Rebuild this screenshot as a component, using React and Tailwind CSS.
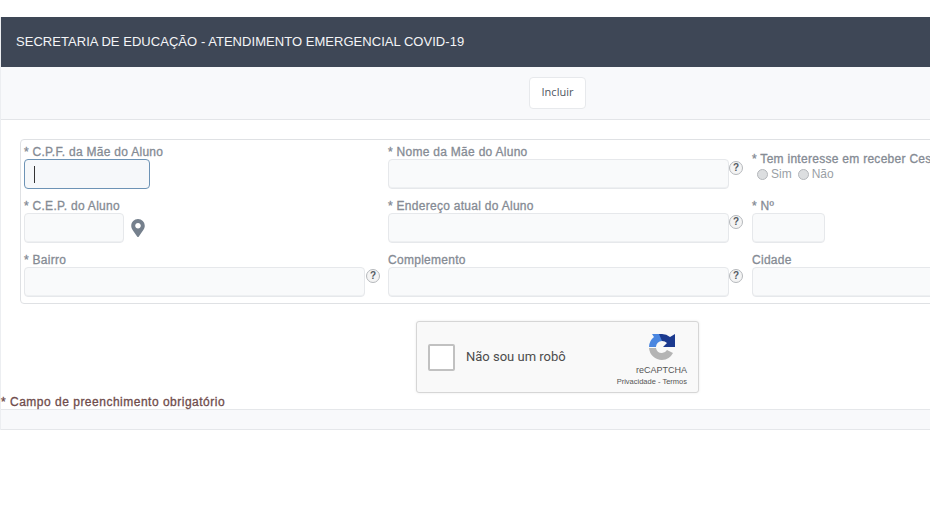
import React from "react";
import { FaMapMarkerAlt } from "react-icons/fa";

const inputClass = "h-[30px] rounded-sm border border-[#e6e8eb] bg-[#f9fafb] shadow-[inset_0_-1px_0_#eef0f2]";

const HelpIcon = ({ className = "" }) => (
  <span className={`flex h-[14px] w-[14px] shrink-0 -translate-y-[6px] items-center justify-center rounded-full border border-[#b5b8bc] bg-[#f4f4f4] text-[10px] font-bold leading-none text-[#555b63] ${className}`}>
    ?
  </span>
);

const Label = ({ children }) => (
  <label className="block h-[14px] text-[12px] leading-[14px] tracking-[0.28px] text-[#858b94] [-webkit-text-stroke:0.3px_#858b94] whitespace-nowrap">
    {children}
  </label>
);

const Field = ({ label, width, help }) => (
  <div className="h-[54px]">
    <Label>{label}</Label>
    <div className="flex items-center">
      <div className={inputClass} style={{ width }} />
      {help && <HelpIcon />}
    </div>
  </div>
);

const Radio = ({ label }) => (
  <span className="flex items-center gap-[3px]">
    <span className="h-[11px] w-[11px] rounded-full border border-[#b4b7bb] bg-[#dcdee0]" />
    {label}
  </span>
);

const RecaptchaLogo = () => (
  <svg width="28" height="28" viewBox="0 0 28 28" className="mr-[11px] self-end">
    <path d="M1 14 L8 14 A6 6 0 0 1 14 8 L14 1 L4 1 L6 4 A13 13 0 0 0 1 14 Z" fill="#4a86e0" />
    <path d="M11 1 L14 1 A13 13 0 0 1 22 4 L27 1 L27 14 L15 14 L19 10 A7 7 0 0 0 14 8 Z" fill="#1c3a8f" />
    <path d="M1 15 L8 15 A6 6 0 0 0 14 20 A6 6 0 0 0 19 17 L25 20 A13 13 0 0 1 14 27 A13 13 0 0 1 1 15 Z" fill="#b4b4b4" />
  </svg>
);

export default function App() {
  return (
    <div className="h-[523px] w-[930px] overflow-hidden bg-white pt-[17px] font-['Liberation_Sans',Arial,sans-serif]">
      <div className="w-[1114px] border-l border-[#eceef1]">
        <div className="flex h-[50px] items-center bg-[#3e4756] pl-[15px] text-[13px] tracking-[0.04px] text-[#f4f5f7]">
          SECRETARIA DE EDUCAÇÃO - ATENDIMENTO EMERGENCIAL COVID-19
        </div>

        <div className="flex h-[53px] items-center justify-center border-b border-[#e3e5e8] bg-[#f8f9fb]">
          <button className="mt-[-1px] h-[32px] w-[57px] rounded-sm border border-[#e7e9ec] bg-white font-['Open_Sans',sans-serif] text-[11px] text-[#4f5660]">
            Incluir
          </button>
        </div>

        <div className="mx-[19px] mt-[19px] h-[165px] rounded-sm border border-[#dfe1e4] pl-[3px] pt-[5px]">
          <div className="grid grid-cols-[364px_364px_350px]">
            <div className="h-[54px]">
              <Label>* C.P.F. da Mãe do Aluno</Label>
              <div className="flex h-[30px] w-[126px] items-center rounded-sm border border-[#6d93b5] bg-[#f6f8fa] pl-[9px]">
                <span className="h-[17px] w-px bg-[#333]" />
              </div>
            </div>
            <Field label="* Nome da Mãe do Aluno" width={341} help />
            <div className="h-[54px] pt-[7px] text-[12px] leading-[15px]">
              <Label>* Tem interesse em receber Ces</Label>
              <div className="flex gap-[6px] pl-[5px] pt-[1px] text-[#9a9fa6]">
                <Radio label="Sim" />
                <Radio label="Não" />
              </div>
            </div>

            <div className="h-[54px]">
              <Label>* C.E.P. do Aluno</Label>
              <div className="flex items-center">
                <div className={`${inputClass} w-[100px]`} />
                <FaMapMarkerAlt className="ml-[5px] text-[#75808d]" size={18} />
              </div>
            </div>
            <Field label="* Endereço atual do Aluno" width={341} help />
            <Field label="* Nº" width={73} />

            <div className="h-[54px]">
              <Label>* Bairro</Label>
              <div className="flex items-center">
                <div className={`${inputClass} w-[341px]`} />
                <HelpIcon className="ml-px" />
              </div>
            </div>
            <Field label="Complemento" width={341} help />
            <Field label="Cidade" width={348} />
          </div>
        </div>

        <div className="mt-[17px] flex justify-center">
          <div className="flex h-[72px] w-[283px] items-center rounded-[3px] border border-[#d6d6d6] bg-[#f9f9f9] pl-[11px] pr-[11px] shadow-[0_0_3px_rgba(0,0,0,0.08)]">
            <span className="h-[27px] w-[27px] rounded-[2px] border-2 border-[#c1c1c1] bg-white" />
            <span className="ml-[11px] flex-1 font-['Roboto',sans-serif] text-[13px] text-[#4c4c4c]">Não sou um robô</span>
            <div className="flex w-[72px] flex-col items-center pt-[5px]">
              <RecaptchaLogo />
              <span className="mt-[4px] self-end text-[9px] leading-[10px] text-[#555]">reCAPTCHA</span>
              <span className="mt-[2px] self-end whitespace-nowrap text-[7.5px] leading-[9px] text-[#555]">Privacidade - Termos</span>
            </div>
          </div>
        </div>

        <div className="mt-[2px] h-[14px] text-[12px] leading-[14px] tracking-[0.5px] text-[#6f4c4c] [-webkit-text-stroke:0.3px_#6f4c4c]">
          * Campo de preenchimento obrigatório
        </div>
        <div className="h-[21px] border-y border-[#e5e7ea] bg-[#f8f9fb]" />
      </div>
    </div>
  );
}
